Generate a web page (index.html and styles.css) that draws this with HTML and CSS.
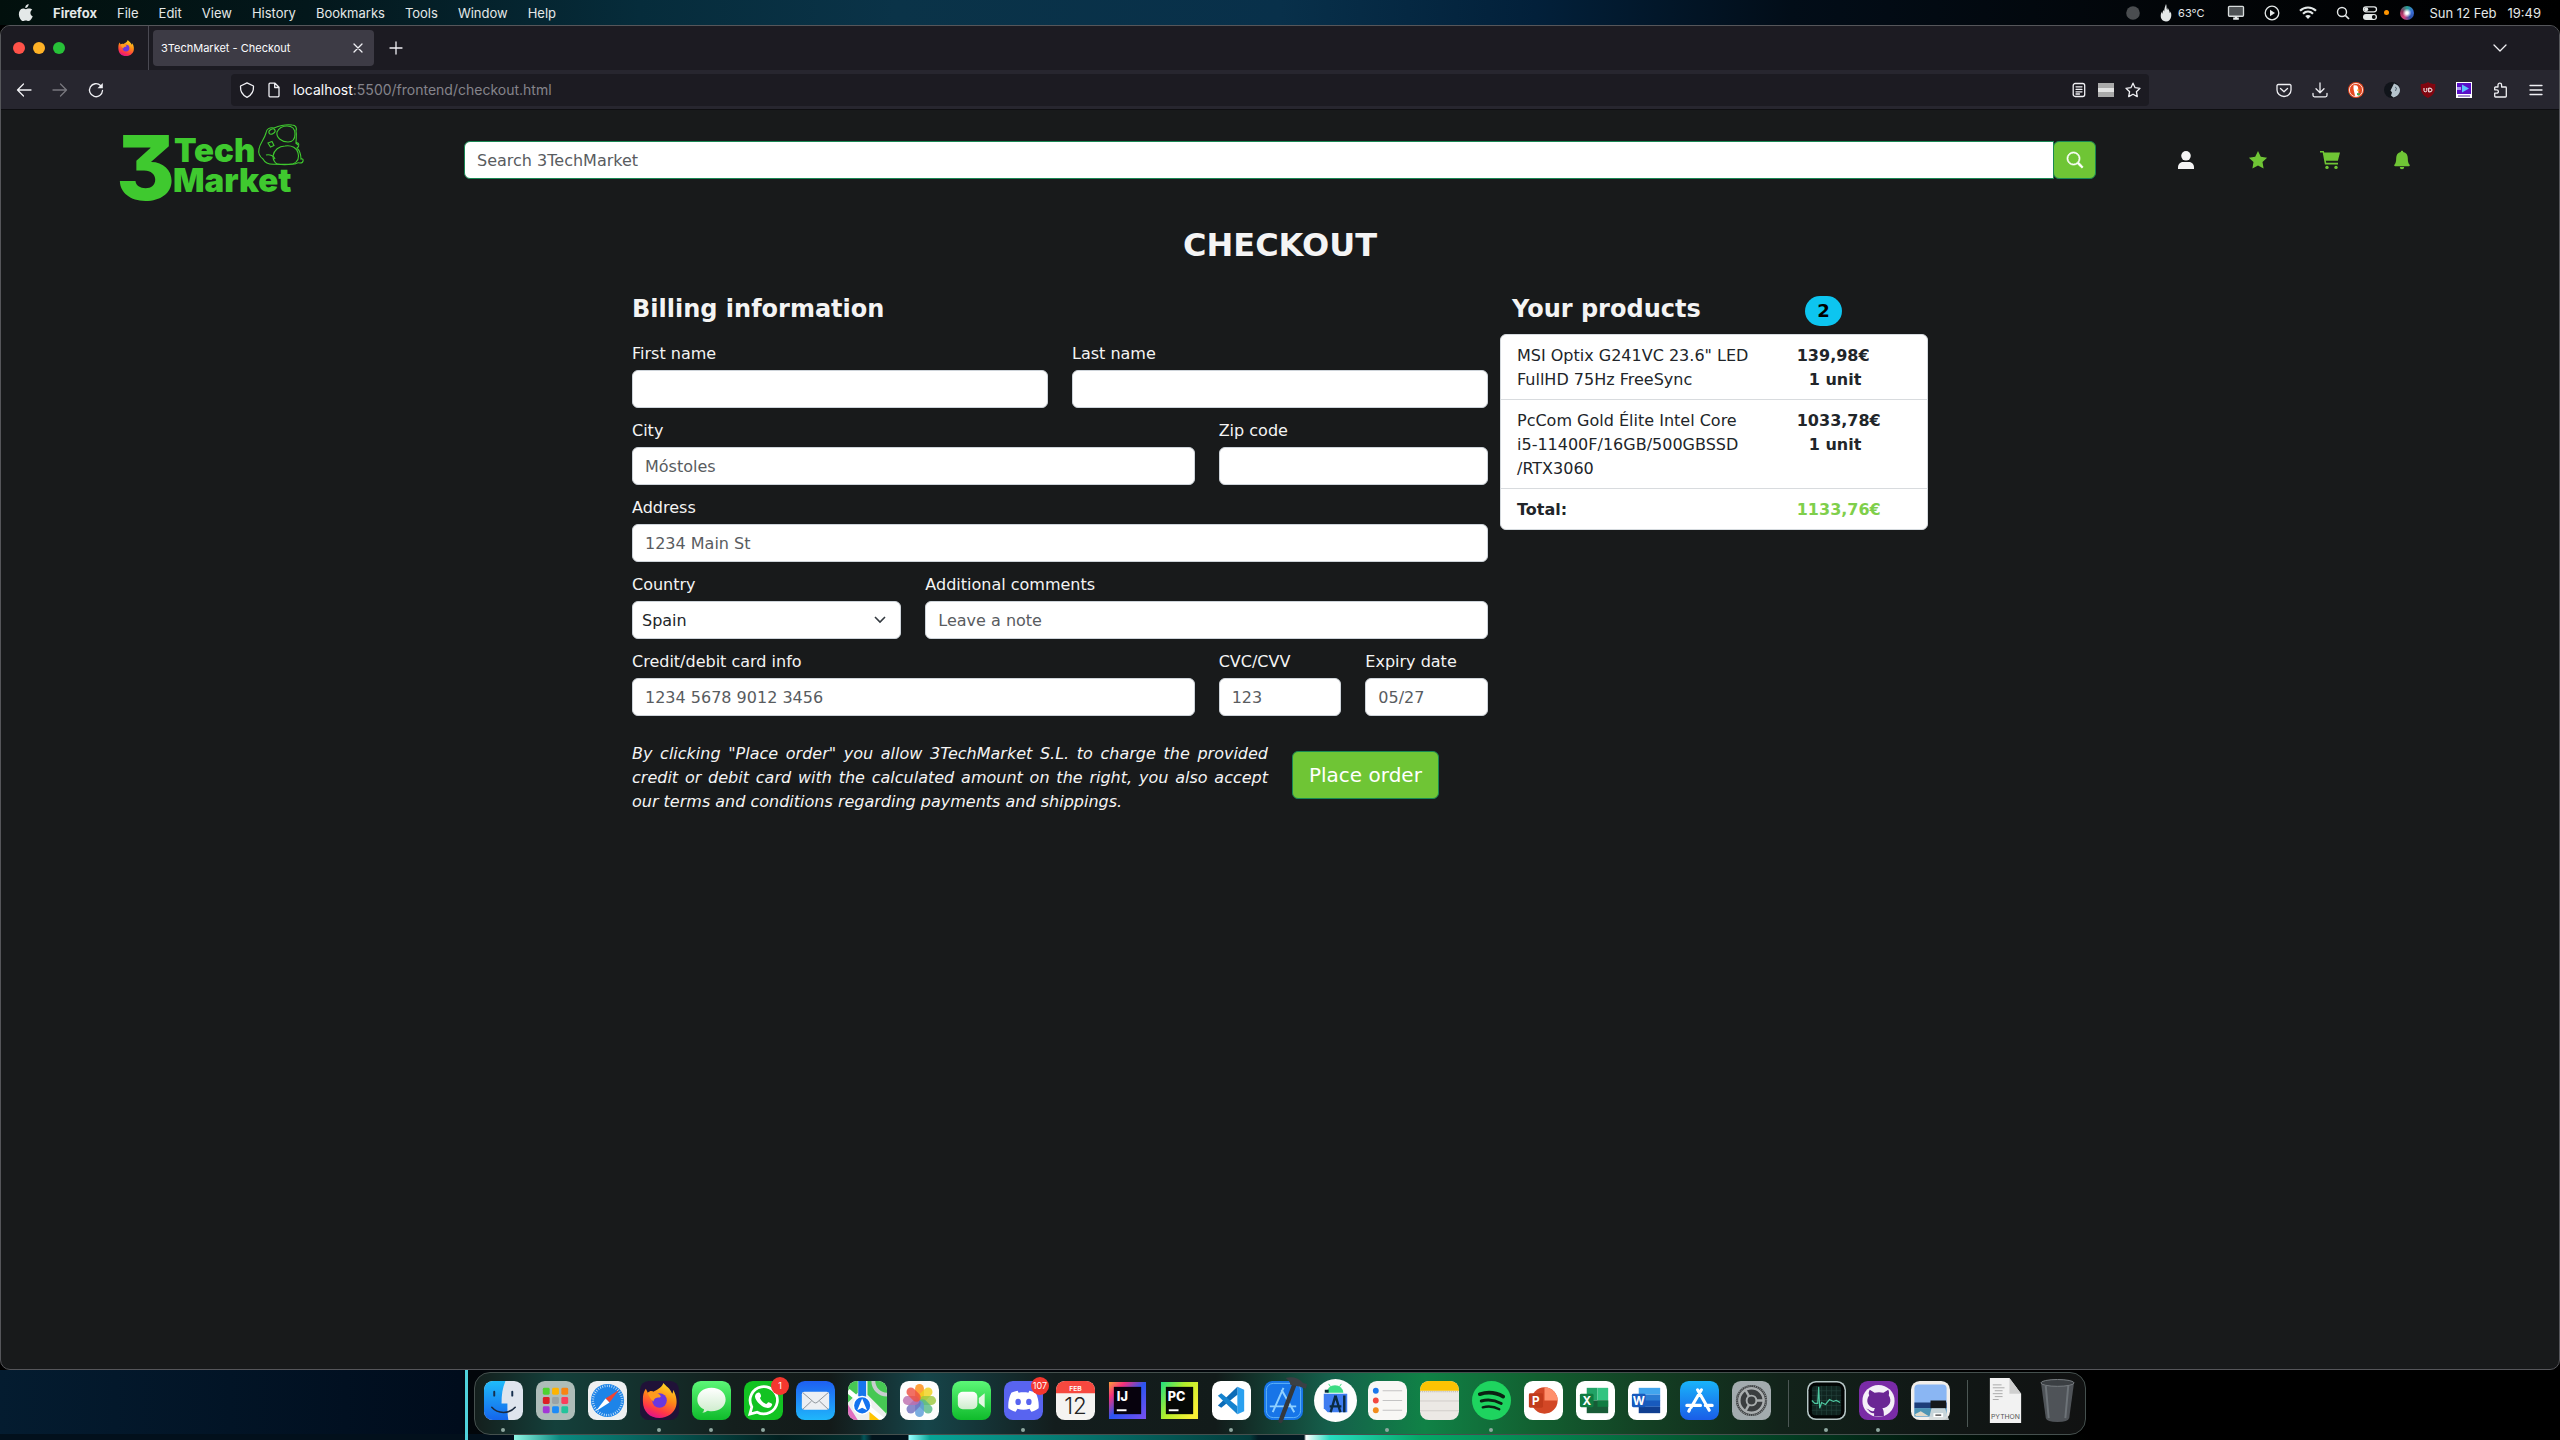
FILE: index.html
```html
<!DOCTYPE html>
<html lang="en">
<head>
<meta charset="utf-8">
<title>3TechMarket - Checkout</title>
<link rel="stylesheet" href="styles.css">
</head>
<body>
<div class="desktop">
  <header class="menubar">
    <svg class="apple" viewBox="0 0 14 17"><path d="M9.6 0c.1 1-.3 2-.9 2.700C8.100 3.500 7.200 4 6.300 3.900 6.200 3 6.600 2 7.200 1.300 7.800.6 8.800.1 9.600 0zM13.300 5.800c-1.200.7-1.900 1.700-1.900 3.100 0 1.500.9 2.800 2.300 3.300-.3 1-.8 1.900-1.400 2.800-.8 1.200-1.600 2-2.800 2-1.100 0-1.400-.6-2.700-.6s-1.700.6-2.700.6c-1.200 0-2-.9-2.800-2.100C-.5 12.300-.6 8.500.9 6.500 1.600 5.400 2.700 4.700 4 4.600c1.200 0 2 .7 2.900.7.900 0 1.700-.8 3.100-.7 1.400 0 2.600.5 3.300 1.200z" fill="#e4e8e8"/></svg>
    <nav class="menus">
      <b>Firefox</b><span>File</span><span>Edit</span><span>View</span><span>History</span><span>Bookmarks</span><span>Tools</span><span>Window</span><span>Help</span>
    </nav>
    <div class="status">
      <svg class="s14" viewBox="0 0 14 14"><circle cx="7" cy="7" r="6.800" fill="#4a4d50"/></svg>
      <span class="temp"><svg class="flame" viewBox="0 0 12 18"><path d="M6 0c1 2 0 4 1.200 6 .4-1 .5-1.500.4-2.500 1 2 2 3.500 2.200 5.500.5-.4.7-.8.7-1.600C12 10 12 17 6 17.500 0 17 0 11 1.800 7.500c0 1 .1 1.500.5 2.200.2-1.500.6-2.700 1.200-4 .2.800.3 1.300.7 1.800C4.200 5 5 2.500 6 0z" fill="#e4e8e8"/></svg>63°C</span>
      <svg class="s18" viewBox="0 0 18 16"><rect x="1" y="1.500" width="16" height="10.500" rx="1" fill="#4e5255" stroke="#d8dcdc" stroke-width="1.400"/><path d="M6 14.500h6M9 12v2.500" stroke="#e4e8e8" stroke-width="2.400"/></svg>
      <svg class="s16" viewBox="0 0 16 16"><circle cx="8" cy="8" r="6.800" fill="none" stroke="#e4e8e8" stroke-width="1.300"/><path d="M6 4.800L11 8l-5 3.200z" fill="#e4e8e8"/></svg>
      <svg class="s18" viewBox="0 0 18 14"><g fill="none" stroke="#e4e8e8" stroke-width="2.200"><path d="M1 5.300C5.500.9 12.500.9 17 5.300M4 8.300c3-2.800 7-2.800 10 0"/></g><path d="M6.200 10.500c1.700-1.500 3.900-1.500 5.600 0L9 13.500z" fill="#e4e8e8"/></svg>
      <svg class="s14" viewBox="0 0 14 14"><circle cx="6" cy="6" r="4.500" fill="none" stroke="#e4e8e8" stroke-width="1.400"/><path d="M9.300 9.300L13 13" stroke="#e4e8e8" stroke-width="1.700"/></svg>
      <span class="control"><svg class="s16" viewBox="0 0 16 16"><rect x="1.500" y="1.800" width="13" height="5" rx="2.500" fill="none" stroke="#e4e8e8" stroke-width="1.300"/><circle cx="4.200" cy="4.300" r="2" fill="#e4e8e8"/><rect x="1" y="9" width="14" height="6" rx="3" fill="#e4e8e8"/><circle cx="11.800" cy="12" r="1.900" fill="#05080a"/></svg><i class="mic"></i></span>
      <i class="siri"></i>
      <time class="clock"><span>Sun 12 Feb</span><span>19:49</span></time>
    </div>
  </header>

  <section class="window">
    <div class="tabs">
      <div class="lights"><i class="red"></i><i class="amber"></i><i class="green"></i></div>
      <svg class="fx" viewBox="0 0 40 40"><use href="#firefox"/></svg>
      <div class="tab"><span>3TechMarket - Checkout</span><button class="plain" aria-label="Close tab"><svg class="s10" viewBox="0 0 10 10"><path d="M1 1l8 8M9 1L1 9" class="ln"/></svg></button></div>
      <button class="plain newtab" aria-label="New tab"><svg class="s14" viewBox="0 0 14 14"><path d="M7 1v12M1 7h12" class="ln"/></svg></button>
      <button class="plain all" aria-label="List tabs"><svg class="s14" viewBox="0 0 14 14"><path d="M1 4l6 6 6-6" class="ln"/></svg></button>
    </div>
    <div class="toolbar">
      <div class="history">
        <button class="plain" aria-label="Back"><svg class="s16" viewBox="0 0 16 16"><path d="M15 8H1.500M7.500 2l-6 6 6 6" class="ln"/></svg></button>
        <button class="plain off" aria-label="Forward"><svg class="s16" viewBox="0 0 16 16"><path d="M1 8h13.500M8.500 2l6 6-6 6" class="ln"/></svg></button>
        <button class="plain" aria-label="Reload"><svg class="s16" viewBox="0 0 16 16"><path d="M14.500 8.500A6.500 6.500 0 1 1 12.500 3.500" class="ln"/><path d="M14.800 1v5.300H9.500z" fill="#f0f0f4"/></svg></button>
      </div>
      <div class="url">
        <svg class="s16" viewBox="0 0 16 16"><path d="M8 .8L14.500 4c.3 5-1.500 9-6.500 11.300C3 13 1.200 9 1.500 4z" class="ln"/></svg>
        <svg class="s16" viewBox="0 0 16 16"><path d="M4 1.200h5l4 4v8.600a1 1 0 0 1-1 1H4a1 1 0 0 1-1-1V2.200a1 1 0 0 1 1-1zM8.700 1.500v4h4" class="ln"/></svg>
        <span class="address"><b>localhost</b>:5500/frontend/checkout.html</span>
        <svg class="s16" viewBox="0 0 16 16"><rect x="2.200" y="1.500" width="11.500" height="13" rx="2" class="ln"/><path d="M5 4.800h6M5 7.300h6M5 9.800h6M5 12h3.500" class="ln"/></svg>
        <i class="flag"></i>
        <svg class="s16" viewBox="0 0 16 16"><path d="M8 1.200l2.100 4.500 4.900.6-3.600 3.400.9 4.900L8 12.200l-4.300 2.400.9-4.900L1 6.300l4.900-.6z" class="ln"/></svg>
      </div>
      <div class="addons">
        <svg class="s16" viewBox="0 0 16 16"><path d="M2.200 2.500h11.600a1.200 1.200 0 0 1 1.200 1.200V8a7 6.500 0 0 1-14 0V3.700a1.200 1.200 0 0 1 1.200-1.200zM4.500 6.500L8 9.700l3.500-3.200" class="ln"/></svg>
        <svg class="s16" viewBox="0 0 16 16"><path d="M8 1v9.500M4 6.800l4 4 4-4M1 11.500v1.800a1.500 1.500 0 0 0 1.500 1.500h11a1.500 1.500 0 0 0 1.500-1.500v-1.800" class="ln"/></svg>
        <svg class="s16" viewBox="0 0 16 16"><circle cx="8" cy="8" r="8" fill="#e4471f"/><circle cx="8" cy="8" r="6.600" fill="none" stroke="#fff" stroke-width=".8"/><path d="M5.500 3.500c4-1 5 1.500 4.700 4l.3 6c-1.500.8-3 .6-3.500.2L5.500 7z" fill="#fff"/><path d="M9 7.500l3.500.5-3.500 1z" fill="#fdc21a"/><path d="M9 11l3 .5v2l-3-.5z" fill="#45a84a"/></svg>
        <svg class="s16" viewBox="0 0 16 16"><circle cx="8" cy="8" r="8" fill="#10141a"/><path d="M10 1.500c3 1 6 3 6 6.500 0 4-3 6.500-6.500 7.500L7 13.500l1-3-1.500-2z" fill="#b5c3cc"/><path d="M11 5l1.500 1-1 3" fill="none" stroke="#52626e"/></svg>
        <svg class="s16" viewBox="0 0 16 16"><path d="M8 0c2 1.500 4.500 2 7.300 2 .3 7-.8 11-7.300 14C1.500 13 .4 9 .7 2 3.500 2 6 1.500 8 0z" fill="#800610"/><path d="M4 6v2.500q0 1.300 1.400 1.300T6.800 8.500V6m1.900 0v4q3.400.2 3.400-2T8.700 6" fill="none" stroke="#fff" stroke-width="1"/></svg>
        <svg class="s16" viewBox="0 0 16 16"><path d="M0 0h16v16H0z" fill="#fff"/><path d="M1 1h14v11H1z" fill="#5a10c8"/><path d="M6 2.500l7 4-7 4z" fill="#5cc4ff"/><path d="M1 5h4v3H1z" fill="#a9e"/><path d="M2 14h12" stroke="#8b6cc0" stroke-width="1.500"/></svg>
        <svg class="s16" viewBox="0 0 16 16"><path d="M6 5V3a1.800 1.800 0 0 1 3.600 0v2h3.900a.8.8 0 0 1 .8.800v8.400a.8.8 0 0 1-.8.800h-10a.8.8 0 0 1-.8-.8v-3h2a1.700 1.700 0 0 0 0-3.400h-2V5.800a.8.8 0 0 1 .8-.8z" class="ln"/></svg>
        <svg class="s16" viewBox="0 0 16 16"><path d="M2 3.500h12M2 8h12M2 12.500h12" class="ln"/></svg>
      </div>
    </div>

    <div class="page">
      <header class="site">
        <a class="logo" href="#" aria-label="3TechMarket">
          <svg viewBox="0 0 190 88">
            <text x="-2" y="84" class="three">3</text>
            <text x="56" y="46" class="word">Tech</text>
            <text x="55" y="76" class="word">Market</text>
            <g fill="none" stroke="#3fc92f" stroke-width="1.100">
              <path d="M148 17c0-4 4-6 8-5 5-2 12-4 18-3 4 0 5 3 4 6 1 4 0 8 0 12 3-1 4 3 1 5 3 3 4 7 4 11 3-1 3 4-1 4-3-1-4 1-6 1-6 0-11 1-17 0-7 1-12-1-14-5-4-3-5-6-4-10 1-6 5-9 7-16z"/>
              <path d="M159 16c2-4 6-6 10-6 5 0 8 3 8 8s-2 8-7 8c-6 0-12-4-11-10z"/>
              <path d="M155 40c1-6 6-10 12-10 7-1 12 2 13 7 2 6-1 9-5 11-6 1-11 1-16 0-3-2-4-5-4-8z"/>
              <ellipse cx="154" cy="15.500" rx="3.300" ry="2.300" transform="rotate(-30 154 15.500)"/>
              <path d="M150 27l4-1.500 2 4-3.500 1.500zM148 39c4-1 8 1 9 4M178 27l2 2"/>
            </g>
          </svg>
        </a>
        <form class="search">
          <input type="search" placeholder="Search 3TechMarket" aria-label="Search 3TechMarket">
          <button type="button" aria-label="Search"><svg class="s16" viewBox="0 0 16 16"><path d="M11.742 10.344a6.500 6.500 0 1 0-1.397 1.398l3.850 3.850a1 1 0 0 0 1.415-1.414zM12 6.500a5.500 5.500 0 1 1-11 0 5.500 5.500 0 0 1 11 0z" fill="#fff" stroke="#fff" stroke-width=".7"/></svg></button>
        </form>
        <nav class="account">
          <a href="#" aria-label="Account"><svg viewBox="0 0 20 20"><circle cx="10" cy="5.800" r="4.800" fill="#f4f4f4"/><path d="M2 19v-1.500C2 13.500 5 12 7 12h6c2 0 5 1.500 5 5.500V19z" fill="#f4f4f4"/></svg></a>
          <a href="#" aria-label="Favourites"><svg viewBox="0 0 20 20"><path d="M10 1l2.800 5.800 6.300.9-4.600 4.400 1.100 6.400L10 15.500l-5.600 3 1.100-6.400L.9 7.700l6.300-.9z" fill="#6fc535"/></svg></a>
          <a href="#" aria-label="Cart"><svg viewBox="0 0 20 20"><path d="M0 1h3.700l.6 1.500H20l-2.100 8.300H5.800l.4 2H18v1.600H4.900L2.700 2.600H0z" fill="#6fc535"/><circle cx="7" cy="17.400" r="1.700" fill="#6fc535"/><circle cx="16" cy="17.400" r="1.700" fill="#6fc535"/></svg></a>
          <a href="#" aria-label="Notifications"><svg viewBox="0 0 20 20"><path d="M10 .8c.8 0 1.200.5 1.200 1.300 3 .6 4.600 3 4.600 6 0 4 .6 5.400 1.800 6.700.4.600.2 1.400-.7 1.400H3.100c-.9 0-1.100-.8-.7-1.400 1.200-1.300 1.800-2.700 1.800-6.700 0-3 1.600-5.400 4.600-6 0-.8.400-1.300 1.200-1.300zM7.800 17h4.400a2.200 2.200 0 0 1-4.400 0z" fill="#6fc535"/></svg></a>
        </nav>
      </header>

      <main>
        <h1>CHECKOUT</h1>
        <div class="columns">
          <form class="billing">
            <h2>Billing information</h2>
            <div class="fields">
              <label class="w6">First name<input type="text"></label>
              <label class="w6">Last name<input type="text"></label>
              <label class="w8">City<input type="text" placeholder="Móstoles"></label>
              <label class="w4">Zip code<input type="text"></label>
              <label class="w12">Address<input type="text" placeholder="1234 Main St"></label>
              <label class="w4">Country<select><option>Spain</option></select></label>
              <label class="w8">Additional comments<input type="text" placeholder="Leave a note"></label>
              <label class="w8">Credit/debit card info<input type="text" placeholder="1234 5678 9012 3456"></label>
              <label class="w2">CVC/CVV<input type="text" placeholder="123"></label>
              <label class="w2">Expiry date<input type="text" placeholder="05/27"></label>
            </div>
            <div class="confirm">
              <p>By clicking "Place order" you allow 3TechMarket S.L. to charge the provided credit or debit card with the calculated amount on the right, you also accept our terms and conditions regarding payments and shippings.</p>
              <div><button type="button">Place order</button></div>
            </div>
          </form>
          <aside class="products">
            <div class="heading"><h2>Your products</h2><span class="badge">2</span></div>
            <ul>
              <li><span>MSI Optix G241VC 23.6" LED<br>FullHD 75Hz FreeSync</span><b>139,98€<small>1 unit</small></b></li>
              <li><span>PcCom Gold Élite Intel Core<br>i5-11400F/16GB/500GBSSD<br>/RTX3060</span><b>1033,78€<small>1 unit</small></b></li>
              <li><b>Total:</b><b class="total">1133,76€</b></li>
            </ul>
          </aside>
        </div>
      </main>
    </div>
  </section>

  <footer class="shelf">
    <div class="dock">
      <div class="app on"><svg viewBox="0 0 40 40"><defs><linearGradient id="fb" x2="0" y2="1"><stop stop-color="#1fbcfb"/><stop offset="1" stop-color="#1465ec"/></linearGradient><clipPath id="rr"><rect width="40" height="40" rx="9"/></clipPath></defs><g clip-path="url(#rr)"><path fill="#dfe5ee" d="M0 0h40v40H0z"/><path fill="url(#fb)" d="M0 0h22c-3 7-4 14-4 23h6c0 6 0 11 1 17H0z"/></g><path d="M10.500 11v4M29 11v4" stroke="#16304e" stroke-width="2" stroke-linecap="round"/><path d="M8 27c6 7 18 7 24 0" fill="none" stroke="#1b2b40" stroke-width="1.600" stroke-linecap="round"/></svg></div>
      <div class="app"><svg viewBox="0 0 40 40"><rect width="40" height="40" rx="9" fill="#aebdb9"/><g><rect x="7" y="7" width="7" height="7" rx="1.500" fill="#4cd32e"/><rect x="16.500" y="7" width="7" height="7" rx="1.500" fill="#ffb400"/><rect x="26" y="7" width="7" height="7" rx="1.500" fill="#f78512"/><rect x="7" y="16.500" width="7" height="7" rx="1.500" fill="#dc1f26"/><rect x="16.500" y="16.500" width="7" height="7" rx="1.500" fill="#9aa3a5"/><rect x="26" y="16.500" width="7" height="7" rx="1.500" fill="#fb3e5c"/><rect x="7" y="26" width="7" height="7" rx="1.500" fill="#a338d6"/><rect x="16.500" y="26" width="7" height="7" rx="1.500" fill="#1c8bf7"/><rect x="26" y="26" width="7" height="7" rx="1.500" fill="#22c39b"/></g></svg></div>
      <div class="app"><svg viewBox="0 0 40 40"><rect width="40" height="40" rx="9" fill="#eef0f1"/><circle cx="20" cy="20" r="17" fill="#1d84e8"/><circle cx="20" cy="20" r="15" fill="none" stroke="#cfe6fa" stroke-width="2.500" stroke-dasharray=".8 1.600"/><path d="M32 9L18 18l4 4z" fill="#f04433"/><path d="M8 31l10-13 4 4z" fill="#fff"/></svg></div>
      <div class="app on"><svg viewBox="0 0 40 40"><defs><linearGradient id="ff" x1=".8" x2=".4" y2="1"><stop stop-color="#ffe226"/><stop offset=".45" stop-color="#ff8a16"/><stop offset=".8" stop-color="#ff3647"/><stop offset="1" stop-color="#e31587"/></linearGradient></defs><rect width="40" height="40" rx="9" fill="#201238"/><g id="firefox"><path d="M24 2c2 3 7 5 9 11 1-1 1-3 1-4 4 7 4 13 3 17-2 7-9 12-17 12C10 38 3 31 3 21c0-5 0-9 3-13l2 4c2-2 4-2 6-1 2-2 8-3 10-9z" fill="url(#ff)"/><circle cx="20" cy="20" r="7.500" fill="#6a37df"/><path d="M8 12c5-2 8-1 11 1 3 2 3 4 0 4-2 0-5 1-5 4-3-2-5-5-6-9z" fill="#ff9a1f"/></g></svg></div>
      <div class="app on"><svg viewBox="0 0 40 40"><defs><linearGradient id="gr" x2="0" y2="1"><stop stop-color="#5cf777"/><stop offset="1" stop-color="#0fbb2b"/></linearGradient><linearGradient id="wh" x2="0" y2="1"><stop stop-color="#fff"/><stop offset="1" stop-color="#cdeccc"/></linearGradient></defs><rect width="40" height="40" rx="9" fill="url(#gr)"/><path d="M20 7c9 0 14.500 5.500 14.500 12S29 31 20 31c-2 0-3.500-.2-4.500-.5-1.500 1.500-3 2-5 2 1.300-1 1.800-2 1.800-3.500C7.500 27 5.500 23 5.500 19 5.500 12.500 11 7 20 7z" fill="url(#wh)"/></svg></div>
      <div class="app on"><svg viewBox="0 0 40 40"><rect width="40" height="40" rx="9" fill="#12c322"/><path d="M6 34l2-7.500A14 14 0 1 1 13.500 32z" fill="none" stroke="#fff" stroke-width="2.800"/><path d="M14 12c2-1 3 1 3.500 3 .3 1.200-1.500 2-1 2.800 1.500 3 3 4.500 6 5.700 1 .3 1.700-2 2.800-1.800 2 .6 4 1.300 3.500 3-1 3-4 3.500-7 2.500-5-1.500-10-7-10.500-11-.2-2 1.200-3.700 2.700-4.200z" fill="#fff"/></svg><em>1</em></div>
      <div class="app"><svg viewBox="0 0 40 40"><defs><linearGradient id="ml" x2="0" y2="1"><stop stop-color="#1e5ff2"/><stop offset="1" stop-color="#1fb7fb"/></linearGradient></defs><rect width="40" height="40" rx="9" fill="url(#ml)"/><rect x="6" y="11" width="28" height="18.500" rx="2.500" fill="#eceff3"/><path d="M7 12l11.500 10q1.500 1 3 0L33 12M7 29l9-8.500M33 29l-9-8.500" fill="none" stroke="#8c9298"/></svg></div>
      <div class="app"><svg viewBox="0 0 40 40"><g clip-path="url(#rr)"><path fill="#eef0ee" d="M0 0h40v40H0z"/><path d="M0 0h10v12L0 22zM20 0h20v34L20 14z" fill="#46c853"/><path d="M0 24l10 16H0z" fill="#e06fc0"/><path d="M22 40v-9l12 9z" fill="#ffc400"/><path d="M14.500 0v30" stroke="#1876ec" stroke-width="8"/><path d="M26 0a14 14 0 0 0 14 14" fill="none" stroke="#c9ccd0" stroke-width="4"/><path d="M0 10l36 30" stroke="#fff" stroke-width="5"/></g><circle cx="14.500" cy="25" r="9" fill="#1373f0" stroke="#fff" stroke-width="1.500"/><path d="M14.500 18l5 12-5-2.500-5 2.500z" fill="#fff"/></svg></div>
      <div class="app"><svg viewBox="0 0 40 40"><rect width="40" height="40" rx="9" fill="#fdfdfd"/><g fill-opacity=".82"><rect x="15.500" y="3" width="9" height="17" rx="4.500" fill="#ff8c12"/><rect x="15.500" y="3" width="9" height="17" rx="4.500" fill="#f0d21c" transform="rotate(45 20 20)"/><rect x="15.500" y="3" width="9" height="17" rx="4.500" fill="#9cc840" transform="rotate(90 20 20)"/><rect x="15.500" y="3" width="9" height="17" rx="4.500" fill="#57ba88" transform="rotate(135 20 20)"/><rect x="15.500" y="3" width="9" height="17" rx="4.500" fill="#5b9bd8" transform="rotate(180 20 20)"/><rect x="15.500" y="3" width="9" height="17" rx="4.500" fill="#7272bf" transform="rotate(225 20 20)"/><rect x="15.500" y="3" width="9" height="17" rx="4.500" fill="#bd6fae" transform="rotate(270 20 20)"/><rect x="15.500" y="3" width="9" height="17" rx="4.500" fill="#ee5142" transform="rotate(315 20 20)"/></g></svg></div>
      <div class="app"><svg viewBox="0 0 40 40"><rect width="40" height="40" rx="9" fill="url(#gr)"/><rect x="6" y="11" width="20" height="18" rx="5" fill="url(#wh)"/><path d="M27.500 17.500l6-5v15l-6-5z" fill="#e4f7e3"/></svg></div>
      <div class="app on"><svg viewBox="0 0 40 40"><rect width="40" height="40" rx="9" fill="#5864f0"/><path d="M14 10c-3 .5-5 1.300-6.500 2C5 17 4 22 4.500 28c2.500 2 5 3 7.500 3.500l1.800-3c4 1.300 8.400 1.300 12.400 0l1.800 3c2.500-.5 5-1.500 7.500-3.500.5-6-.5-11-3-16-1.500-.7-3.500-1.500-6.500-2l-1 2c-3-.6-7-.6-10 0z" fill="#fff"/><ellipse cx="14.500" cy="21.500" rx="2.800" ry="3.200" fill="#5864f0"/><ellipse cx="25.500" cy="21.500" rx="2.800" ry="3.200" fill="#5864f0"/></svg><em>107</em></div>
      <div class="app"><svg viewBox="0 0 40 40"><rect width="40" height="40" rx="9" fill="#f5f3f1"/><path d="M0 12.500V9a9 9 0 0 1 9-9h22a9 9 0 0 1 9 9v3.500z" fill="#f7483f"/><text x="20" y="10" class="mon">FEB</text><text x="20" y="34" class="day">12</text></svg></div>
      <div class="app"><svg viewBox="0 0 40 40"><defs><linearGradient id="ij" x2="1" y2="1"><stop stop-color="#f9a03a"/><stop offset=".22" stop-color="#f4317b"/><stop offset=".5" stop-color="#2a55f0"/><stop offset="1" stop-color="#7a4ff0"/></linearGradient></defs><path d="M1 1h38v38H1z" fill="url(#ij)"/><path d="M6 6h28v28H6z" fill="#07020d"/><text x="9" y="20" class="jb">IJ</text><path d="M9 30h10" stroke="#fff" stroke-width="2"/></svg></div>
      <div class="app"><svg viewBox="0 0 40 40"><defs><linearGradient id="pc" x2="1" y2=".6"><stop stop-color="#1fe07f"/><stop offset=".5" stop-color="#b4ee2a"/><stop offset="1" stop-color="#f7ef35"/></linearGradient></defs><path d="M1 1h38v38H1z" fill="url(#pc)"/><path d="M6 6h28v28H6z" fill="#050805"/><text x="8" y="20" class="jb">PC</text><path d="M9 30h10" stroke="#fff" stroke-width="2"/></svg></div>
      <div class="app on"><svg viewBox="0 0 40 40"><rect width="40" height="40" rx="9" fill="#fff"/><path d="M26 6l7 3v22l-7 3z" fill="#2aa0ef"/><path d="M26 6v8L9.500 27.500 6 25z" fill="#0c6cb8"/><path d="M26 34v-8L9.500 12.500 6 15z" fill="#1583cf"/></svg></div>
      <div class="app"><svg class="tall" viewBox="0 0 44 48"><rect x="2" y="4" width="40" height="40" rx="9" fill="#1775e8"/><rect x="4.500" y="6.500" width="35" height="35" rx="7" fill="none" stroke="#5fb4f8"/><path d="M11 36l11-25M33 36L20 13M8 30h27" stroke="#8fd0ff" stroke-width="2" fill="none"/><path d="M33 8L19 45" stroke="#34383c" stroke-width="4.500" stroke-linecap="round"/><path d="M24 1c7-2 14 0 18 5l4 1-1 5-6-2-10-2c0-3-2-5-5-7z" fill="#3b4044"/></svg></div>
      <div class="app"><svg class="tall" viewBox="0 0 44 48"><circle cx="22" cy="24" r="22" fill="#fdfdfd"/><path d="M10 17h24v19H14l-4-4z" fill="#3f7df0"/><path d="M13 16a8.500 7.500 0 0 1 17 0z" fill="#3ddc84"/><path d="M15 7l2 3M28 7l-2 3" stroke="#3ddc84"/><path d="M11 13h4v3h-4z" fill="#072f3a"/><path d="M22 19l-5 17M22 19l5 17M16 30h12M31 19v17" stroke="#0b2b42" stroke-width="2.500" fill="none"/></svg></div>
      <div class="app on"><svg viewBox="0 0 40 40"><rect width="40" height="40" rx="9" fill="#f8f7f5"/><path d="M15 10h20M15 20h20M15 30h20" stroke="#c4c4c4" stroke-width="1.200"/><circle cx="8" cy="10" r="3" fill="#1977ec"/><circle cx="8" cy="20" r="3" fill="#f2473f"/><circle cx="8" cy="30" r="3" fill="#f28c1c"/></svg></div>
      <div class="app"><svg viewBox="0 0 40 40"><rect width="40" height="40" rx="9" fill="#ece9e5"/><path d="M0 10V9a9 9 0 0 1 9-9h22a9 9 0 0 1 9 9v1z" fill="#fdc303"/><path d="M0 11h40" stroke="#b3afa8" stroke-dasharray="1 1"/><path d="M0 20.500h40M0 30.500h40" stroke="#cbc8c4" stroke-width=".8"/></svg></div>
      <div class="app on"><svg viewBox="0 0 40 40"><circle cx="20" cy="20" r="20" fill="#1ed45f"/><g fill="none" stroke="#0b2112" stroke-linecap="round"><path d="M8 13.500c8-2.500 17-1.500 24 2.500" stroke-width="3.800"/><path d="M9.500 20.500c7-2 14-1 20.500 2.500" stroke-width="3"/><path d="M11 27c6-1.500 12-.8 17 2" stroke-width="2.400"/></g></svg></div>
      <div class="app"><svg viewBox="0 0 40 40"><rect width="40" height="40" rx="9" fill="#fff"/><circle cx="21" cy="20" r="13.500" fill="#d24726"/><path d="M21 6.500A13.500 13.500 0 0 1 34.500 20H21z" fill="#ff8f6b"/><rect x="5" y="12.500" width="14.500" height="15" rx="1.500" fill="#c13b1b"/><text x="12.200" y="24.500" class="ms">P</text></svg></div>
      <div class="app"><svg viewBox="0 0 40 40"><rect width="40" height="40" rx="9" fill="#fff"/><path d="M11 7h11v13H11z" fill="#21a366"/><path d="M22 7h11v13H22z" fill="#33c481"/><path d="M11 20h22v13H11z" fill="#185c37"/><path d="M22 20h11v6.500H22z" fill="#107c41"/><rect x="4" y="13" width="14" height="14" rx="1.500" fill="#107c41"/><text x="11" y="24.500" class="ms">X</text></svg></div>
      <div class="app"><svg viewBox="0 0 40 40"><rect width="40" height="40" rx="9" fill="#fff"/><path d="M11 7h22v7H11z" fill="#41a5ee"/><path d="M11 14h22v6.500H11z" fill="#2b7cd3"/><path d="M11 20h22v6.500H11z" fill="#185abd"/><path d="M11 26.500h22V33H11z" fill="#103f91"/><rect x="4" y="13" width="14" height="14" rx="1.500" fill="#185abd"/><text x="11" y="24.500" class="ms">W</text></svg></div>
      <div class="app"><svg viewBox="0 0 40 40"><defs><linearGradient id="as" x2="0" y2="1"><stop stop-color="#19b4fa"/><stop offset="1" stop-color="#1a5de8"/></linearGradient></defs><rect width="40" height="40" rx="9" fill="url(#as)"/><path d="M22 9L11.500 27M18 9l12 21M7 25h14M26 25h7M10 29l-1 2" fill="none" stroke="#fff" stroke-width="3.200" stroke-linecap="round"/></svg></div>
      <div class="app"><svg viewBox="0 0 40 40"><rect width="40" height="40" rx="9" fill="#a3abae"/><circle cx="20" cy="20" r="16" fill="#3a3d3f"/><circle cx="20" cy="20" r="12.500" fill="none" stroke="#a9adae" stroke-width="2.500"/><circle cx="20" cy="20" r="15" fill="none" stroke="#8b8f90" stroke-width="1.500" stroke-dasharray="1 1"/><circle cx="20" cy="20" r="5" fill="none" stroke="#a9adae" stroke-width="2"/><path d="M25 20h8M17.500 15.700l-4-7M17.500 24.300l-4 7" stroke="#a9adae" stroke-width="2.500"/></svg></div>
      <hr>
      <div class="app on"><svg viewBox="0 0 40 40"><rect width="40" height="40" rx="9" fill="#b6c6c6"/><rect x="1.500" y="1.500" width="37" height="37" rx="8" fill="#020504"/><rect x="5" y="5" width="30" height="30" rx="3" fill="#102420"/><path d="M10 5v30M15 5v30M20 5v30M25 5v30M30 5v30M5 10h30M5 15h30M5 20h30M5 25h30M5 30h30" stroke="#26463f" stroke-width=".6"/><path d="M5 20l3 3h3l1-17 1 22 2-6 4 2 4-5 4 2 3-1 4 2" fill="none" stroke="#4fc9a2" stroke-width="1.200"/></svg></div>
      <div class="app on"><svg viewBox="0 0 40 40"><rect width="40" height="40" rx="9" fill="#7a2ba6"/><circle cx="20" cy="20.500" r="16.500" fill="#f4eff8"/><path d="M11 9l5 3c3-.7 6-.7 9 0l5-3c1 2 1 4 .5 5.500 4 6 .5 12.500-6.500 13.500 1.500 2 1.500 5 1.500 8.500h-10v-3.500c-5 .5-5-3.500-8-4.500 3-.5 4 4 8 2 0-1 .3-1.800 1-2.500-7-1-10.500-7.500-6-13.500C9.500 13 10 11 11 9z" fill="#6a2694"/></svg></div>
      <div class="app"><svg viewBox="0 0 40 40"><rect width="40" height="40" rx="9" fill="#f1eeea"/><rect x="3.500" y="3.500" width="33" height="33" rx="4" fill="#8ab6f3"/><path d="M3.500 22h33v6h-33z" fill="#1d3d79"/><path d="M3.500 28h33v8.500h-33z" fill="#4d95b5"/><path d="M4 34l6-3 8 5H5z" fill="#e0d9c8"/><path d="M20 20h16v8H20z" fill="#15181a"/><path d="M21 28h14l4 12H18z" fill="#d5dadb" fill-opacity=".9"/><path d="M23 33h10v4H23z" fill="#fff"/><path d="M25 35h6" stroke="#555" stroke-width="1.500"/></svg></div>
      <hr>
      <div class="app"><svg class="tall" viewBox="0 0 44 48"><path d="M6 1h20l12 16v30H6z" fill="#f2f2f2"/><path d="M26 1l12 16H26z" fill="#cfcfcf"/><path d="M9 8h9M9 11h12M11 14h8M9 17h10M11 20h8M9 23h6" stroke="#aaa"/><text x="22" y="43" class="py">PYTHON</text></svg></div>
      <div class="app"><svg class="tall" viewBox="0 0 44 48"><path d="M5 5h34l-5 37q-1 4-12 4t-12-4z" fill="#565b60" fill-opacity=".9"/><path d="M10 9l3 33M33 9l-3 33" stroke="#6d7378" stroke-width="2"/><ellipse cx="22" cy="6" rx="17" ry="3.500" fill="#3b3f43" stroke="#777c80"/></svg></div>
    </div>
  </footer>
</div>
</body>
</html>
```
FILE: styles.css
```css
* { box-sizing: border-box; }
body { margin: 0; background: #000; }
i, em { font-style: normal; }
svg { display: block; flex: none; overflow: visible; }
button, input, select { font: inherit; }

.desktop {
  min-height: 100vh;
  display: flex;
  flex-direction: column;
  font-family: Inter, "Liberation Sans", sans-serif;
  color: #e4e8e8;
  background: #000;
}
.s10 { width: 10px; height: 10px; }
.s14 { width: 14px; height: 14px; }
.s16 { width: 16px; height: 16px; }
.s18 { width: 18px; height: 15px; }
.ln { fill: none; stroke: #f0f0f4; stroke-width: 1.3; stroke-linecap: round; stroke-linejoin: round; }
.plain { border: 0; padding: 0; background: none; color: inherit; }

/* Menu bar */
.menubar {
  height: 25px;
  padding: 0 19px;
  display: flex;
  align-items: center;
  font-size: 13px;
  background: linear-gradient(90deg, #02100d 0, #03171b 12%, #062c3b 25%, #0a3348 35%, #08304a 50%, #02203a 60%, #020d18 70%, #020508 85%, #000 100%);
}
.apple { width: 14px; height: 17px; }
.menus { display: flex; gap: 20px; margin-left: 20px; }
.status { margin-left: auto; display: flex; align-items: center; gap: 19px; }
.temp { display: flex; align-items: center; gap: 6px; font-size: 11px; padding: 0 3px 0 1px; }
.flame { width: 12px; height: 18px; }
.control { display: flex; align-items: center; gap: 6px; margin: 0 -8px 0 -7px; }
.mic { width: 5px; height: 5px; border-radius: 50%; background: #ff9500; }
.siri { width: 14px; height: 14px; border-radius: 50%; background: radial-gradient(circle, #fff 12%, transparent 45%), conic-gradient(#27a193, #3a6fd8, #2b4fa8, #d8437c, #8f2f5a, #27a193); }
.clock { display: flex; gap: 11px; margin-left: -3px; }

/* Browser window */
.window {
  flex: 1;
  display: flex;
  flex-direction: column;
  border: 1px solid #55565a;
  border-radius: 10px;
  overflow: hidden;
  background: #181a1b;
}
.tabs { height: 44px; display: flex; align-items: center; background: #1c1b22; }
.lights { display: flex; gap: 8px; padding: 0 52px 0 12px; }
.lights i { width: 12px; height: 12px; border-radius: 50%; }
.red { background: #ff5249; }
.amber { background: #ffb226; }
.green { background: #27c138; }
.fx { width: 18px; height: 18px; margin-right: 11px; }
.tab {
  position: relative;
  display: flex;
  align-items: center;
  justify-content: space-between;
  width: 221px;
  height: 36px;
  margin-left: 7px;
  padding: 0 11px 0 8px;
  border-radius: 4px;
  background: #3d3b45;
  color: #fbfbfe;
  font-size: 11px;
}
.tab::before { content: ""; position: absolute; left: -5px; top: -4px; height: 44px; border-left: 1px solid #4a4952; }
.newtab { margin-left: 15px; }
.all { margin: 0 52px 0 auto; }
.toolbar { height: 40px; display: flex; align-items: center; background: #27262f; border-bottom: 1px solid #0e0e11; }
.history { display: flex; gap: 20px; width: 230px; padding-left: 15px; }
.off { opacity: .4; }
.url {
  flex: 1;
  display: flex;
  align-items: center;
  gap: 11px;
  height: 32px;
  padding: 0 8px;
  border-radius: 4px;
  background: #1c1b22;
  font-size: 14px;
}
.address { flex: 1; color: #85848b; }
.address b { font-weight: 400; color: #fbfbfe; }
.flag { width: 16px; height: 14px; background: linear-gradient(#aaa 33%, #e2e2e2 33% 66%, #aaa 66%); }
.addons { display: flex; gap: 20px; padding: 0 15px 0 127px; }

/* Shop page */
.page { flex: 1; font-family: "DejaVu Sans", Verdana, sans-serif; font-size: 16px; line-height: 24px; color: #f4f4f4; }
.site { display: grid; grid-template-columns: 463px 1fr 463px; align-items: center; padding: 6px 0; }
.logo { padding-left: 117px; }
.logo svg { width: 190px; height: 88px; }
.three, .word { font-family: Inter, sans-serif; font-weight: 900; fill: #3fc92f; }
.three { font-size: 90px; font-weight: 800; font-feature-settings: "cv09"; }
.word { font-size: 33px; }
.search { display: flex; }
.search input {
  flex: 1;
  min-width: 0;
  height: 38px;
  padding: 0 12px;
  border: 1px solid #198754;
  border-radius: 6px 0 0 6px;
  background: #fff;
}
.search button {
  width: 43px;
  height: 38px;
  margin-left: -1px;
  padding: 0;
  display: flex;
  align-items: center;
  justify-content: center;
  border: 1px solid #198754;
  border-radius: 6px;
  background: #6fc535;
}
::placeholder { color: #595c5f; opacity: 1; }
.account { display: flex; gap: 52px; padding-left: 80px; }
.account svg { width: 20px; height: 20px; }

main { width: 1320px; max-width: 100%; margin: 0 auto; }
h1 { margin: 16px 0 31px; font-size: 32px; line-height: 38px; text-align: center; }
h2 { margin: 0; font-size: 24px; line-height: 29px; }
.columns { display: grid; grid-template-columns: 2fr 1fr; align-items: start; }
.billing { padding: 0 12px; }
.fields { display: grid; grid-template-columns: repeat(12, 1fr); gap: 11px 24px; margin-top: 18px; }
.w2 { grid-column: span 2; }
.w4 { grid-column: span 4; }
.w6 { grid-column: span 6; }
.w8 { grid-column: span 8; }
.w12 { grid-column: span 12; }
.fields input, .fields select {
  display: block;
  width: 100%;
  height: 38px;
  margin-top: 4px;
  padding: 0 12px;
  border: 1px solid #ced4da;
  border-radius: 6px;
  background: #fff;
  color: #212529;
}
.fields select {
  appearance: none;
  padding: 1px 9px 0;
  background: #fff url("data:image/svg+xml,%3Csvg xmlns='http://www.w3.org/2000/svg' viewBox='0 0 12 12'%3E%3Cpath d='M1 3l5 5 5-5' fill='none' stroke='%23343a40' stroke-width='1.600'/%3E%3C/svg%3E") no-repeat right 14px center / 12px 12px;
}
.confirm { display: grid; grid-template-columns: minmax(0, 636fr) minmax(0, 196fr); gap: 24px; margin-top: 26px; }
.confirm p { margin: 0; font-style: italic; text-align: justify; }
.confirm div { padding-top: 9px; }
.confirm button {
  height: 48px;
  padding: 0 16px;
  border: 1px solid #198754;
  border-radius: 6px;
  background: #6fc535;
  color: #fff;
  font-size: 20px;
}
.products { padding-right: 12px; }
.heading { display: grid; grid-template-columns: 2fr 1fr; align-items: start; height: 39px; margin-right: -12px; }
.heading h2 { padding-left: 12px; }
.badge {
  justify-self: start;
  margin: 1px 0 0 12px;
  padding: 0 12px;
  border-radius: 15px;
  background: #0dc5f0;
  color: #000;
  font-size: 18px;
  font-weight: 700;
  line-height: 30px;
}
.products ul { margin: 0; padding: 0; list-style: none; border: 1px solid #d5dade; border-radius: 6px; background: #fff; color: #212529; }
.products li { display: grid; grid-template-columns: 71% 1fr; padding: 9px 16px 7px; white-space: nowrap; }
.products li + li { border-top: 1px solid #d8dbde; }
.products small { display: block; padding-left: 12px; font-size: 16px; }
.products .total { color: #7fcf4b; }

/* Dock over the wallpaper */
.shelf {
  height: 70px;
  display: flex;
  justify-content: center;
  align-items: flex-start;
  padding-top: 2px;
  background:
    linear-gradient(90deg, transparent 465px, #4fd2dc 465px 468px, transparent 468px) no-repeat,
    linear-gradient(90deg, #041c30 0, #000c1c 18%, #02060a 18.300%, #02060a 60%, #000 75%) 0 0 / 100% 64px no-repeat,
    linear-gradient(90deg, #02101c 0 514px, #8ff5e4 514px, #0a8a80 560px, #022020 780px, #05302f 860px, #03565a 864px, #02141c 872px 908px, #9ff 909px, #07a597 930px, #033c3c 1250px, #021a22 1258px 1304px, #fff 1306px, #27dcc0 1330px, #05a868 1420px, #04552f 1700px, #02140c 1950px, #000 2090px);
}
.dock {
  display: flex;
  height: 63px;
  padding: 0 2px;
  border: 1px solid #45504e;
  border-radius: 16px;
  background: linear-gradient(90deg, #141f1d 0, #14403b 5%, #141f1d 16%, #131a19 22%, #16454a 28%, #131d1d 36%, #121b1a 46%, #155f4b 53%, #108246 59%, #125f30 66%, #133f23 73%, #12231a 81%, #111816 90%, #111212 100%);
}
.app { position: relative; width: 52px; padding-top: 8px; display: flex; justify-content: center; align-items: flex-start; }
.app svg { width: 39px; height: 39px; }
.app .tall { width: 43px; height: 47px; margin-top: -4px; }
.app.on::after { content: ""; position: absolute; bottom: 2px; left: 24px; width: 4px; height: 4px; border-radius: 50%; background: #8fa8a0; }
.app em {
  position: absolute;
  top: 4px;
  right: 0;
  min-width: 18px;
  height: 18px;
  border-radius: 9px;
  background: #f5372f;
  color: #fff;
  font-size: 9px;
  line-height: 18px;
  text-align: center;
}
.dock hr { width: 1px; height: 47px; margin: 7px 11px; border: 0; background: #4c5754; }
.mon { font-size: 7px; font-weight: 600; fill: #fff; text-anchor: middle; }
.day { font-size: 23px; font-weight: 300; fill: #222; text-anchor: middle; }
.jb { font-size: 13px; font-weight: 800; fill: #fff; }
.ms { font-size: 12px; font-weight: 700; fill: #fff; text-anchor: middle; }
.py { font-size: 7px; fill: #555; text-anchor: middle; }
```
